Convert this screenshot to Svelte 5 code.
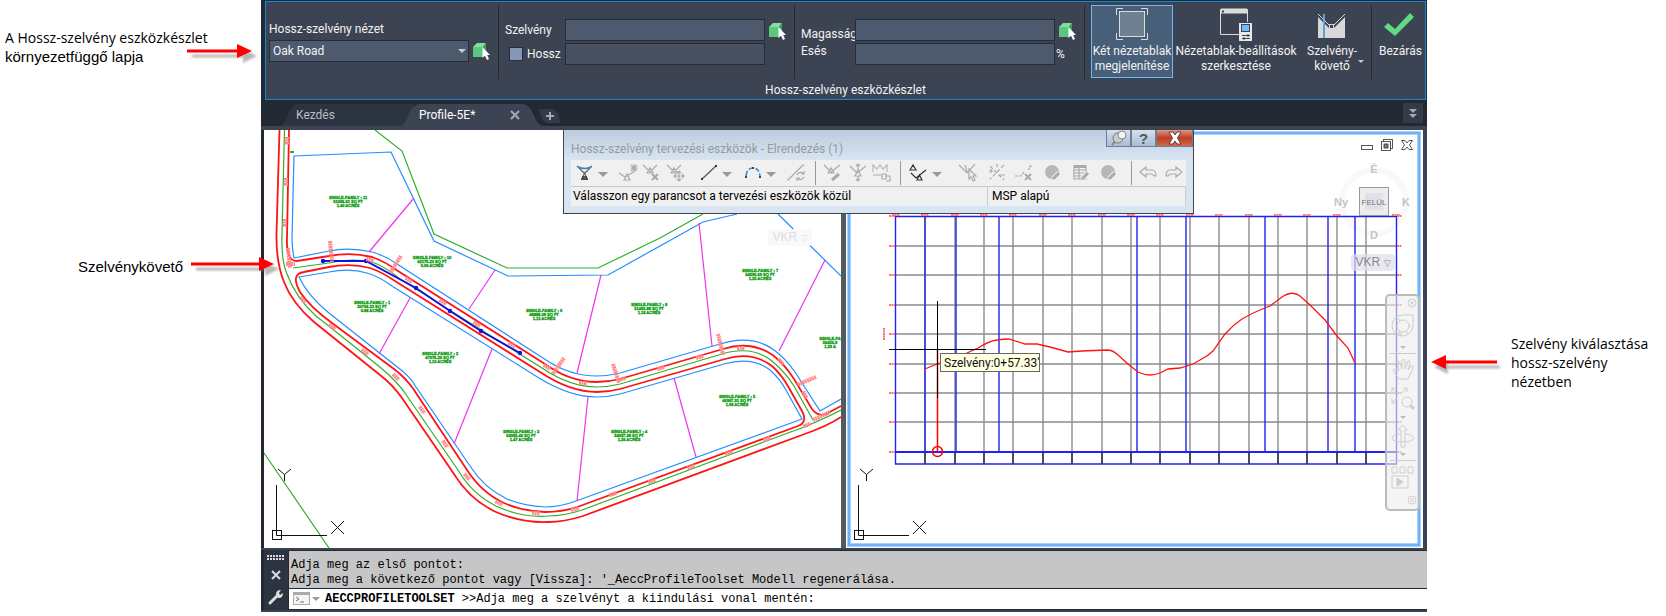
<script>
  let profileView = 'Oak Road';
  let useLength = false;
  let station = '';
  let stationLength = '';
  let elevation = '';
  let grade = '';

  // Lot labels: the three lines and the centre of the label
  const lots = [
    { lines: ['SINGLE-FAMILY : 11', '61006.01 SQ FT', '1.40 ACRES'], x: 84, y: 72 },
    { lines: ['SINGLE-FAMILY : 10', '42170.23 SQ FT', '0.96 ACRES'], x: 168, y: 132 },
    { lines: ['SINGLE-FAMILY : 1', '30704.23 SQ FT', '0.88 ACRES'], x: 108, y: 177 },
    { lines: ['SINGLE-FAMILY : 9', '48888.08 SQ FT', '1.12 ACRES'], x: 280, y: 185 },
    { lines: ['SINGLE-FAMILY : 2', '47976.29 SQ FT', '1.10 ACRES'], x: 176, y: 228 },
    { lines: ['SINGLE-FAMILY : 8', '51463.88 SQ FT', '1.18 ACRES'], x: 385, y: 179 },
    { lines: ['SINGLE-FAMILY : 7', '54596.69 SQ FT', '1.25 ACRES'], x: 496, y: 145 },
    { lines: ['SINGLE-FA', '56456.9', '1.29 A'], x: 566, y: 213 },
    { lines: ['SINGLE-FAMILY : 3', '63992.49 SQ FT', '1.47 ACRES'], x: 257, y: 306 },
    { lines: ['SINGLE-FAMILY : 4', '54937.98 SQ FT', '1.26 ACRES'], x: 365, y: 306 },
    { lines: ['SINGLE-FAMILY : 5', '46967.91 SQ FT', '1.08 ACRES'], x: 473, y: 271 }
  ];

  // Station marks along the alignments: x, y, angle
  const marks = [
    [23, 11, 90], [22, 52, 90], [21, 93, 90], [39, 170, 50], [68, 197, 38], [101, 222, 38],
    [132, 247, 45], [158, 280, 57], [181, 314, 57], [203, 347, 50], [235, 373, 25], [272, 383, 5],
    [311, 379, -15], [349, 364, -20], [388, 351, -20], [427, 337, -20], [465, 323, -20], [503, 309, -20],
    [106, 130, 15], [145, 150, 32], [179, 172, 32], [213, 194, 32], [248, 215, 32], [283, 237, 32],
    [319, 253, 5], [358, 249, -16], [397, 238, -16], [436, 227, -16], [477, 218, 0], [517, 232, 50],
    [541, 265, 65], [543, 295, -20]
  ];

  const nodes = [[59, 131], [102, 131], [152, 158], [186, 181], [217, 201], [256, 223]];

  const gridX = [79, 109, 138, 167, 197, 226, 256, 285, 314, 344, 373, 403, 432, 461, 491, 520];
  const gridY = [116, 145, 175, 204, 234, 263, 292];
  const curveX = [79, 110, 153, 291, 340, 419, 482, 509];

  const toolGroups = [
    { icons: ['tangents'], caret: true },
    { icons: ['insertPvi', 'deletePvi', 'movePvi'] },
    { icons: ['line'], caret: true },
    { icons: ['arc'], caret: true },
    { icons: ['convert'] },
    { sep: true },
    { icons: ['editPvi', 'raisePvi', 'copy'] },
    { sep: true },
    { icons: ['pviBased'], caret: true },
    { icons: ['select', 'deleteEntity', 'deleteMark', 'edit', 'grid', 'edit'], wide: true },
    { sep: true, last: true },
    { icons: ['undo', 'redo'], tight: true }
  ];

  const toolNames = {
    tangents: 'Érintők', insertPvi: 'MSP beszúrása', deletePvi: 'MSP törlése', movePvi: 'MSP mozgatása',
    line: 'Vonal', arc: 'Ív', convert: 'Átalakítás', editPvi: 'MSP szerkesztése', raisePvi: 'Emelés',
    copy: 'Másolás', pviBased: 'MSP alapú', select: 'Kiválasztás', deleteEntity: 'Elem törlése',
    deleteMark: 'Törlés', edit: 'Szerkesztés', grid: 'Táblázat', undo: 'Vissza', redo: 'Újra'
  };
</script>

{#snippet pick()}
  <button class="pick" aria-label="Kijelölés a rajzon">
    <svg width="18" height="18" viewBox="0 0 18 18">
      <path d="M0 5H10V15H0Z" fill="#5ac87f" />
      <path d="M0 5L4 1H13L10 5Z" fill="#86dca1" />
      <path d="M10 5L13 1V12L10 15Z" fill="#35a25b" />
      <path d="M9.500 5V16L12 13.800L14 18L16 17L14.200 13H17Z" fill="#fff" />
    </svg>
  </button>
{/snippet}

{#snippet arrow(length)}
  <svg class="arrow" width={length} height="24" viewBox="0 0 {length} 24" aria-hidden="true">
    <g class="shadow">
      <path d="M0 8.500H{length - 14}V3L{length} 10L{length - 14} 17V11.500H0Z" fill="#888" opacity=".6" />
    </g>
    <path d="M0 8.500H{length - 15}V3L{length} 10L{length - 15} 17V11.500H0Z" fill="#f00" />
  </svg>
{/snippet}

{#snippet ucs()}
  <g fill="none" stroke="#111">
    <path d="M12.500 355V405.500H63" />
    <rect x="8.500" y="400.500" width="9" height="9" />
    <path d="M14 339L20.500 344.500L27 339M20.500 344.500V351M67 391L80 404M80 391L67 404" />
  </g>
{/snippet}

{#snippet tool(name)}
  <button class="tool" aria-label={toolNames[name]}>
    <svg width="24" height="24" viewBox="0 0 24 24" fill="none" stroke="#aaa" stroke-width="1.200">
      {#if name === 'tangents'}
        <path d="M4 5L11 12M19 5L12 12M9 18L11.500 12L14 18Z" stroke="#666" />
        <path d="M5 6Q12 9 18 6" stroke="#2b88d8" stroke-width="1.500" />
        <path d="M8 18H15M9 16H14" stroke="#333" stroke-width="1.500" />
      {:else if name === 'insertPvi'}
        <path d="M2 12L8 16L18 10M7 19L10 13L13 19Z" />
        <path d="M17 3V11M13 7H21M14 4L20 10M20 4L14 10" />
      {:else if name === 'deletePvi'}
        <path d="M2 4L9 11L16 4M6 12L9 7L12 12Z" />
        <path d="M11 13L17 19M17 13L11 19" stroke-width="2" />
      {:else if name === 'movePvi'}
        <path d="M2 4L9 11L16 4M6 12L9 7L12 12Z" />
        <path d="M14 10V20M9 15H19M12 12L14 10L16 12M12 18L14 20L16 18M11 13L9 15L11 17M17 13L19 15L17 17" />
      {:else if name === 'line'}
        <path d="M5 18L19 5" stroke="#555" />
        <path d="M4 18H6M18 5H20" stroke="#333" stroke-width="2" />
      {:else if name === 'arc'}
        <path d="M5 15Q6 7 12 7Q18 7 19 15" stroke="#2b88d8" stroke-width="1.500" stroke-dasharray="5 2" />
        <path d="M4 16H6M18 16H20M11 7H13" stroke="#444" stroke-width="2" />
      {:else if name === 'convert'}
        <path d="M3 19L18 4M2 19H4M17 4H19" />
        <path d="M12 14A4 4 0 0 1 19 13M19 10V13H16M19 16A4 4 0 0 1 12 17M12 20V17H15" />
      {:else if name === 'editPvi'}
        <path d="M2 4L9 11L18 4M6 12L9 7L12 12Z" />
        <path d="M10 19L17 13" stroke-width="3" />
      {:else if name === 'raisePvi'}
        <path d="M4 5L11 12L20 5M9 15L12 9L15 15ZM12 9V3M10 5L12 3L14 5M12 15V20M10 18L12 20L14 18" />
      {:else if name === 'copy'}
        <path d="M3 11V4L7 8L10 4L13 8L17 4V11" stroke="#bbb" />
        <path d="M3 14H11M12 13H16V18H12ZM16 15H20V20H16" />
      {:else if name === 'pviBased'}
        <path d="M3 9L6 4L9 9ZM4 12L9 17L19 9M10 19L12.500 14L15 19Z" stroke="#333" />
      {:else if name === 'select'}
        <path d="M2 4L10 12L18 3M8 4L10 11" />
        <path d="M12 8V18L14 16L16 20L18 19L16 15H19Z" fill="#f0f0f0" />
      {:else if name === 'deleteEntity'}
        <path d="M5 5L19 19M19 4L5 18" stroke-dasharray="4 2" />
        <path d="M4 10H8M6 8V12M15 14H20M12 3V6" />
      {:else if name === 'deleteMark'}
        <path d="M2 15H8L11 11M15 9L18 5M16 5H20" stroke-dasharray="3 1" />
        <path d="M12 13L18 19M18 13L12 19" stroke-width="2" />
      {:else if name === 'edit'}
        <circle cx="11" cy="11" r="7" fill="#b8b8b8" stroke="none" />
        <path d="M12 18L18 12" stroke="#f0f0f0" stroke-width="5" />
        <path d="M12 18L18 12" stroke-width="3" />
      {:else if name === 'grid'}
        <path d="M5 5H17V18H5ZM5 9H17M5 12H17M5 15H17M10 5V18" />
        <path d="M5 5.500H17" stroke-width="3" />
        <path d="M13 18L19 12" stroke="#f0f0f0" stroke-width="5" />
        <path d="M13 18L19 12" stroke-width="3" />
      {:else if name === 'undo'}
        <path d="M4 11L10 6V9H16Q20 9 20 15H18Q17 13 15 13H10V16Z" />
      {:else}
        <path d="M20 11L14 6V9H8Q4 9 4 15H6Q7 13 9 13H14V16Z" />
      {/if}
    </svg>
  </button>
{/snippet}

<div class="page">
  <aside class="notes-left">
    <div class="note first">
      <p><span class="humanist">A Hossz-szelvény eszközkészlet</span><br />környezetfüggő lapja</p>
      <div class="first-arrow">{@render arrow(65)}</div>
    </div>
    <div class="note second">
      <p>Szelvénykövető</p>
      {@render arrow(83)}
    </div>
  </aside>

  <main class="app">
    <section class="ribbon">
      <div class="panels">
        <div class="panel view-panel">
          <label for="view">Hossz-szelvény nézet</label>
          <div class="combo">
            <select id="view" bind:value={profileView}>
              <option>Oak Road</option>
            </select>
            <i class="caret"></i>
          </div>
          {@render pick()}
        </div>

        <div class="panel fields station-panel">
          <label for="station">Szelvény</label>
          <input id="station" type="text" bind:value={station} />
          {@render pick()}
          <label class="check"><input type="checkbox" bind:checked={useLength} /> Hossz</label>
          <input class="dim" type="text" aria-label="Hossz" bind:value={stationLength} />
        </div>

        <div class="panel fields elevation-panel">
          <label class="low" for="elevation">Magasság</label>
          <input id="elevation" type="text" bind:value={elevation} />
          {@render pick()}
          <label class="high" for="grade">Esés</label>
          <input id="grade" type="text" bind:value={grade} />
          <span class="unit">%</span>
        </div>

        <div class="panel buttons">
          <button class="big active">
            <svg width="36" height="36" viewBox="0 0 36 36" fill="none" stroke="#dcdcdc">
              <rect x="5.500" y="5.500" width="25" height="25" fill="#6f8091" />
              <path d="M2.500 9V2.500H9M27 2.500H33.500V9M33.500 27V33.500H27M9 33.500H2.500V27" />
            </svg>
            Két nézetablak<br />megjelenítése
          </button>
          <button class="big settings">
            <svg width="36" height="36" viewBox="0 0 36 36" fill="none" stroke="#dcdcdc">
              <path d="M21 28.500H2.500V3.500H29.500V16" />
              <path d="M3 5H29" stroke-width="5" />
              <path d="M4 5.500H6" stroke="#3c4453" stroke-width="2" />
              <rect x="21" y="17" width="13" height="18" fill="#e8e8e8" stroke="none" />
              <rect x="23.500" y="18.500" width="8" height="7" fill="#6cbcff" stroke="#3c4453" />
              <path d="M24 29.500H32M24 32.500H32M30 28V31M26 31V34" stroke="#3c4453" />
            </svg>
            Nézetablak-beállítások<br />szerkesztése
          </button>
          <button class="big tracker">
            <svg width="36" height="36" viewBox="0 0 36 36" fill="none">
              <path d="M4 11L9 16V32H4ZM11 18L15 22H20L31 11V32H11Z" fill="#d8d8d8" />
              <path d="M4 8L15 19M20 19L31 8" stroke="#d8d8d8" />
              <rect x="15.500" y="18.500" width="4" height="4" fill="#3c4453" stroke="#d8d8d8" />
              <path d="M10 8V32" stroke="#6cbcff" stroke-width="1.500" />
            </svg>
            Szelvény-<br />követő
            <i class="caret"></i>
          </button>
        </div>

        <div class="panel buttons last">
          <button class="big close">
            <svg width="36" height="36" viewBox="0 0 36 36">
              <path d="M2 21L6 17L13 23L28 7L32 11L13 30Z" fill="#5edb84" />
            </svg>
            Bezárás
          </button>
        </div>
      </div>
      <h1>Hossz-szelvény eszközkészlet</h1>
    </section>

    <nav class="tabs">
      <button class="tab">Kezdés</button>
      <button class="tab current">Profile-5E*
        <svg width="10" height="10" viewBox="0 0 10 10"><path d="M1 1L9 9M9 1L1 9" stroke="#a5a9b0" stroke-width="2" /></svg>
      </button>
      <button class="add" aria-label="Új rajz">
        <svg width="22" height="14" viewBox="0 0 22 14">
          <path d="M0 0H14Q20 2 21 14H8Q2 12 0 0Z" fill="#343b48" />
          <path d="M11 3V11M7 7H15" stroke="#a5a9b0" stroke-width="2" />
        </svg>
      </button>
      <button class="more" aria-label="További lapok">
        <svg width="10" height="10" viewBox="0 0 10 10" fill="#a5a9b0">
          <path d="M1 1H9L5 5ZM1 6H9L5 10Z" />
        </svg>
      </button>
    </nav>

    <section class="viewports">
      <div class="viewport">
        <svg class="drawing" viewBox="0 0 577 418" fill="none">
          <g stroke="#2fae2f" stroke-width="1.200">
            <path d="M111 0L138 21L170 104L243 138H334L396 108L439 84" />
            <path d="M0 323L65 418" />
            <path d="M20.500 0L18 104Q17 130 23 144Q32 168 52 186Q80 208 117 238Q134 252 143 266L194 340Q208 364 232 376Q258 388 284 386Q300 386 318 380L540 297Q566 286 577 280" />
            <path d="M29 138L65 133Q86 128 108 132Q122 137 136 149L278 238Q306 257 333 257Q344 257 356 254L458 224Q488 215 508 231Q522 243 530 256L549 290" />
          </g>
          <g stroke="#1e8fff" stroke-width="1.200">
            <path d="M30 128Q28 118 28 108L30 26L127 22L170 111L244 146L344 145L439 92L473 84M514 84L577 146" />
            <path d="M30 128L65 121Q85 117 108 122Q122 126 133 134L282 230Q306 246 333 246Q344 246 356 243L456 214Q488 204 510 220Q521 228 531 242L556 281L577 269" />
            <path d="M35 147L65 142Q86 138 103 143Q116 147 128 156L275 248Q306 267 333 267Q345 267 356 264L460 234Q488 226 506 240Q516 249 522 260L538 289L312 371Q296 377 281 377Q260 376 243 369Q220 358 206 336L152 257Q146 246 132 236L65 183Q44 166 35 147Z" />
          </g>
          <g stroke="#ff1414" stroke-width="1.800">
            <path d="M15.500 0L12.500 104Q12 132 20 152Q28 173 50 192L116 245Q128 254 138 268L190 344Q206 370 232 382Q257 393 284 392Q300 392 319 386L538 305Q564 296 577 287" />
            <path d="M25 0L23 108Q22 131 33 131L65 126Q87 122 108 127Q122 132 134 141L281 234Q306 252 333 252Q344 252 356 249L459 219Q488 210 510 226Q521 235 530 249L548 279Q554 287 562 284L577 276" />
            <path d="M40 142L65 137Q87 133 106 138Q118 142 131 151L276 242Q306 262 333 262Q345 262 356 259L461 229Q488 221 508 236Q518 245 525 258L538 281Q544 292 534 296L316 376Q300 382 281 382Q258 381 240 373Q218 363 203 340L150 260Q142 248 130 239L68 193Q46 177 36 162Q26 144 40 142Z" />
          </g>
          <path
            d="M150 68L105 122M231 140L205 179M146 168L115 224M228 219L190 314M337 145L313 243M435 93L448 216M561 130L515 221M324 267L313 371M410 248L432 327"
            stroke="#f032f0"
            stroke-width="1.200"
          />
          <path d="M59 131L102 131L152 158L186 181L217 201L256 223" stroke="#1010e0" stroke-width="1.800" />
          {#each nodes as [x, y]}
            <circle cx={x} cy={y} r="2.200" fill="#1010e0" />
          {/each}
          <g stroke="#ff8a8a" stroke-width="4" stroke-dasharray="2 .500">
            {#each marks as [x, y, a]}
              <path d="M-4 0H4" transform="translate({x} {y}) rotate({a})" />
            {/each}
            <path d="M66 111L68 132M137 126L126 143M300 228L289 244M349 234L355 253M454 204L459 225M552 247L533 255M549 290L566 282M24 118L26 138M22 134H31" />
          </g>
          <path d="M26 22H30" stroke="#2fae2f" stroke-width="2" />
          <g class="lots">
            {#each lots as lot}
              {#each lot.lines as line, i}
                <text x={lot.x} y={lot.y - 3 + i * 4}>{line}</text>
              {/each}
            {/each}
          </g>
          {@render ucs()}
        </svg>
        <button class="vkr faint">VKR <span>▽</span></button>
      </div>

      <div class="splitter"></div>

      <div class="viewport">
        <svg class="drawing" viewBox="0 0 577 418" fill="none">
          <circle cx="528" cy="72" r="32" stroke="#f9f9f9" stroke-width="6" />
          <g stroke="#8a8a8a" stroke-width="1.400">
            {#each gridX as x}
              <path d="M{x} 86V322" />
              <path d="M{x} 322V334" stroke="#000" />
            {/each}
            {#each gridY as y}
              <path d="M50 {y}H550" />
            {/each}
          </g>
          <g stroke="#2222f0" stroke-width="1.400">
            {#each curveX as x}
              <path d="M{x} 86V322" />
            {/each}
            <path d="M49.500 86.500H550.500V334H49.500Z" />
            <path d="M49 322H551" stroke-width="2" />
          </g>
          <g stroke="#ff7070" stroke-width="2" stroke-dasharray="2 .500">
            {#each [86, ...gridY, 322] as y}
              <path d="M43 {y}H49M551 {y}H556" />
            {/each}
            {#each [50, ...gridX, 550] as x}
              <path d="M{x - 4} 85H{x + 4}" />
            {/each}
            <path d="M38 198V210" />
          </g>
          <path
            d="M79 239L86 236L94 233L121 223L132 218Q143 211 151 210Q158 209 163 209L179 214L191 214L204 217L222 222L236 221L261 220Q267 220 272 225L282 234L292 242Q298 245 304 245Q309 245 314 243L322 239L334 238L347 234L354 230Q362 226 367 221L379 204Q387 195 396 189Q408 182 424 176L436 167Q446 160 454 166L464 175L479 190L491 206L502 218L509 233"
            stroke="#ff1414"
            stroke-width="1.300"
          />
          <path d="M91.500 219V322" stroke="#f00" stroke-width="1.500" />
          <circle cx="91.500" cy="321.500" r="5" stroke="#f00" stroke-width="1.500" />
          <path d="M91.500 171V268M43 219.500H140" stroke="#000" />
          <rect x="94.500" y="223.500" width="99" height="18" fill="#ffffe1" stroke="#666" />
          <text class="tip" x="98" y="237">Szelvény:0+57.33'</text>
          <g class="cube">
            <rect x="513.500" y="57.500" width="29" height="28" fill="#ededed" stroke="#999" />
            <rect x="519" y="63" width="18" height="17" fill="#dfe1e6" />
            <text x="528" y="75" class="face">FELÜL</text>
            <text x="528" y="43">É</text>
            <text x="495" y="76">Ny</text>
            <text x="560" y="76">K</text>
            <text x="528" y="109">D</text>
          </g>
          {@render ucs()}
          <rect x="3" y="3" width="570" height="412" stroke="#a6d2ff" stroke-width="4" />
          <rect x="3" y="3" width="570" height="412" stroke="#5ea8f7" stroke-width="1.500" />
        </svg>

        <div class="win-buttons">
          <button aria-label="Kis méret">
            <svg width="14" height="14" viewBox="0 0 14 14" fill="#fff" stroke="#555"><rect x="1.500" y="7.500" width="11" height="4" /></svg>
          </button>
          <button aria-label="Teljes méret">
            <svg width="14" height="14" viewBox="0 0 14 14" fill="#fff" stroke="#555">
              <rect x="3.500" y="1.500" width="9" height="9" /><rect x="1.500" y="3.500" width="9" height="9" /><rect x="4.500" y="6.500" width="3" height="3" stroke-width="2" />
            </svg>
          </button>
          <button aria-label="Bezárás">
            <svg width="14" height="14" viewBox="0 0 14 14" fill="#fff" stroke="#555">
              <path d="M1.500 2.500H5L7 5L9 2.500H12.500L9.500 7L12.500 11.500H9L7 9L5 11.500H1.500L4.500 7Z" />
            </svg>
          </button>
        </div>
        <button class="vkr">VKR <span>▽</span></button>

        <div class="navbar">
          <button class="end" aria-label="Bezárás">
            <svg width="10" height="10" viewBox="0 0 10 10"><circle cx="5" cy="5" r="4" /><path d="M3 3L7 7M7 3L3 7" /></svg>
          </button>
          <button class="tall" aria-label="Navigációs kerék">
            <svg width="24" height="24" viewBox="0 0 24 24"><path d="M12 1H22V12A10.500 10.500 0 1 1 12 1Z" /><circle cx="12" cy="12" r="6" /><path d="M4 12H6M18 12H20M7 4L9 7M7 20L9 17M17 20L15 17" /></svg>
          </button>
          <i class="caret"></i>
          <hr />
          <button class="tall" aria-label="Eltolás">
            <svg width="24" height="24" viewBox="0 0 24 24"><path d="M8 21L2 12Q4 9 8 13L6 4Q8 2 9 5L11 11L11 2Q13 0 14 3V11L17 3Q19 2 19 5L17 12L20 8Q23 7 22 10L17 21Z" /></svg>
          </button>
          <button class="mid" aria-label="Nagyítás">
            <svg width="24" height="24" viewBox="0 0 24 24"><path d="M1 1L6 6M1 5V1H5M16 1L11 6M12 1H16V5M1 16L6 11M1 12V16H5" /><circle cx="16" cy="15" r="5" /><path d="M19 18L23 22" stroke-width="3" /></svg>
          </button>
          <i class="caret"></i>
          <button class="mid" aria-label="Keringés">
            <svg width="24" height="24" viewBox="0 0 24 24"><path d="M10 23V6H7L12 1L16 6H14V23ZM9 10Q1 11 1 14Q2 18 12 18Q22 18 23 14Q22 11 15 10" /></svg>
          </button>
          <i class="caret"></i>
          <hr />
          <button class="tall" aria-label="Bemutató">
            <svg width="24" height="24" viewBox="0 0 24 24"><path d="M1 2H6V8H1ZM9 2H14V8H9ZM17 2H22V8H17ZM1 11H17V23H1Z" /><path d="M6 13L12 17L6 21Z" fill="#ccc" /></svg>
          </button>
          <button class="end" aria-label="Beállítások">
            <svg width="10" height="10" viewBox="0 0 10 10"><circle cx="5" cy="5" r="4" /><path d="M3 4H7M3 6H7" /></svg>
          </button>
        </div>
      </div>

      <div class="palette">
        <header>
          <h2>Hossz-szelvény tervezési eszközök - Elrendezés (1)</h2>
          <button aria-label="Rögzítés">
            <svg width="18" height="16" viewBox="0 0 18 16">
              <path d="M2 15L7 9" stroke="#888" stroke-width="2" />
              <circle cx="8" cy="8" r="5" fill="#ccc" stroke="#777" />
              <circle cx="12" cy="5" r="4" fill="#f4f4f4" stroke="#888" />
            </svg>
          </button>
          <button class="help" aria-label="Súgó">?</button>
          <button class="red" aria-label="Bezárás">
            <svg width="16" height="14" viewBox="0 0 16 14">
              <path d="M2 1H6L8 4L10 1H14L10.500 7L14 13H10L8 10L6 13H2L5.500 7Z" fill="#fff" stroke="#6b3a36" />
            </svg>
          </button>
        </header>
        <div class="toolbar">
          {#each toolGroups as group}
            {#if group.sep}
              <i class="sep" class:push={group.last}></i>
            {:else}
              <div class="group" class:wide={group.wide} class:tight={group.tight}>
                {#each group.icons as name}
                  {@render tool(name)}
                {/each}
                {#if group.caret}<i class="caret"></i>{/if}
              </div>
            {/if}
          {/each}
        </div>
        <div class="status">
          <span>Válasszon egy parancsot a tervezési eszközök közül</span>
          <span class="mode">MSP alapú</span>
        </div>
      </div>
    </section>

    <section class="command">
      <div class="grip">
        <svg width="18" height="6" viewBox="0 0 18 6"><path d="M0 1H18M0 4H18" stroke="#ddd" stroke-width="2" stroke-dasharray="2 1" /></svg>
        <button aria-label="Bezárás">
          <svg width="12" height="12" viewBox="0 0 12 12"><path d="M2 2L10 10M10 2L2 10" stroke="#ddd" stroke-width="2" /></svg>
        </button>
        <button aria-label="Testreszabás">
          <svg width="16" height="16" viewBox="0 0 16 16">
            <path d="M2 14L9 7" stroke="#ddd" stroke-width="3" stroke-linecap="round" />
            <path d="M8 5Q8 1 13 1L11 4L12 6L15 4Q15 9 11 9L8 8Z" fill="#ddd" />
          </svg>
        </button>
      </div>
      <div class="console">
        <div class="history">
          <p>Adja meg az első pontot:</p>
          <p>Adja meg a következő pontot vagy [Vissza]: '_AeccProfileToolset Modell regenerálása.</p>
        </div>
        <div class="prompt">
          <svg width="17" height="14" viewBox="0 0 17 14" fill="none" stroke="#aaa">
            <rect x=".5" y=".5" width="16" height="12" fill="#f4f4f4" /><path d="M1 2H16" stroke-width="2" /><path d="M3 5L6 7L3 9M7 10H11" stroke="#777" />
          </svg>
          <i class="caret"></i>
          <label for="cmd"><b>AECCPROFILETOOLSET</b> &gt;&gt;Adja meg a szelvényt a kiindulási vonal mentén:</label>
          <input id="cmd" type="text" />
        </div>
      </div>
    </section>
  </main>

  <aside class="notes-right">
    <div class="flip">{@render arrow(66)}</div>
    <p class="humanist">Szelvény kiválasztása<br />hossz-szelvény<br />nézetben</p>
  </aside>
</div>

<style>
  :global(body) {
    margin: 0;
    background: #fff;
  }

  .page {
    display: flex;
    align-items: flex-start;
    font-family: Roboto, 'Open Sans', sans-serif;
    font-size: 12px;
    color: #000;
  }

  .page * {
    box-sizing: border-box;
  }

  p,
  h1,
  h2 {
    margin: 0;
    font-weight: normal;
  }

  button,
  input,
  select {
    font: inherit;
    color: inherit;
    border: 0;
    margin: 0;
    padding: 0;
    background: none;
  }

  svg {
    display: block;
    flex: none;
  }

  .caret {
    flex: none;
    width: 0;
    height: 0;
    border: 4px solid transparent;
    border-top-color: #c8ccd2;
    border-bottom-width: 0;
  }

  /* callouts */
  .notes-left {
    flex: none;
    width: 261px;
    padding-top: 28px;
    font-family: 'Liberation Sans', Arial, sans-serif;
    font-size: 15px;
    line-height: 19px;
  }

  .humanist {
    font-family: 'Open Sans', 'Noto Sans', sans-serif;
    font-size: 14px;
  }

  .note {
    position: relative;
    white-space: nowrap;
  }

  .first {
    padding-left: 5px;
  }

  .first-arrow {
    position: absolute;
    left: 187px;
    top: 13px;
  }

  .second {
    display: flex;
    align-items: center;
    gap: 8px;
    padding-left: 78px;
    margin-top: 188px;
    z-index: 2;
  }

  .arrow {
    overflow: visible;
  }

  .shadow {
    filter: blur(1px);
    transform: translate(5px, 5px);
  }

  .notes-right {
    flex: none;
    display: flex;
    gap: 14px;
    width: 239px;
    padding: 334px 0 0 4px;
    line-height: 19px;
  }

  .flip {
    transform: scaleX(-1);
    padding-top: 18px;
  }

  .flip .shadow {
    transform: translate(-3px, 5px);
  }

  /* application frame */
  .app {
    flex: 1;
    min-width: 0;
    background: #222933;
    padding-top: 1px;
  }

  .ribbon {
    margin: 0 1px 0 4px;
    height: 99px;
    border: 1px solid #1287cf;
    background: #3c4453;
    color: #f2f2f2;
    line-height: 15px;
  }

  .panels {
    display: flex;
    height: 79px;
    padding-top: 3px;
  }

  .panel {
    height: 74px;
    border-right: 1px solid #222933;
    white-space: nowrap;
  }

  .panel.last {
    border: 0;
    flex: 1;
    justify-content: center;
  }

  .view-panel {
    display: grid;
    grid-template-columns: 200px 20px;
    grid-template-rows: 18px 22px;
    align-content: start;
    padding: 17px 9px 0 3px;
  }

  .view-panel label {
    grid-column: 1 / 3;
  }

  .combo {
    display: flex;
    align-items: center;
    border: 1px solid #262c37;
    background: #4d5a6e;
    padding-right: 2px;
  }

  select {
    flex: 1;
    appearance: none;
    height: 18px;
    padding-left: 3px;
    line-height: 18px;
  }

  .pick {
    width: 18px;
    height: 18px;
    margin: 2px 0 0 4px;
  }

  .fields {
    display: grid;
    grid-template-rows: 22px 22px;
    gap: 2px 0;
    align-content: start;
    align-items: center;
    padding: 14px 9px 0 6px;
  }

  .station-panel {
    grid-template-columns: 60px 200px 20px;
  }

  .elevation-panel {
    grid-template-columns: 54px 200px 20px;
  }

  .fields input[type='text'] {
    width: 200px;
    height: 22px;
    border: 1px solid #262c37;
    background: #4d5a6e;
    padding: 0 4px;
  }

  .fields input.dim {
    background: #475161;
  }

  .check {
    display: flex;
    align-items: center;
    gap: 4px;
    padding-left: 4px;
  }

  .check input {
    appearance: none;
    width: 14px;
    height: 14px;
    border: 1px solid #262c37;
    background: #8497b8;
  }

  .low {
    padding-top: 8px;
  }

  .high {
    padding-bottom: 6px;
  }

  .unit {
    padding-left: 1px;
  }

  .buttons {
    display: flex;
    padding: 0 6px;
  }

  .big {
    display: flex;
    flex-direction: column;
    align-items: center;
    position: relative;
    height: 73px;
    border: 1px solid transparent;
    line-height: 15px;
    text-align: center;
    white-space: nowrap;
  }

  .big svg {
    margin-bottom: 2px;
  }

  .big.active {
    width: 82px;
    border-color: #6cb8f5;
    background: #475f79;
  }

  .settings {
    width: 126px;
  }

  .tracker {
    width: 66px;
  }

  .tracker .caret {
    position: absolute;
    right: 0;
    bottom: 14px;
    border-width: 3px;
    border-bottom-width: 0;
  }

  .ribbon h1 {
    font-size: 12px;
    line-height: 18px;
    text-align: center;
  }

  .tabs {
    display: flex;
    align-items: flex-end;
    height: 30px;
    padding: 0 4px 0 19px;
    border-bottom: 4px solid #3c4453;
    color: #b9bdc4;
  }

  .tab {
    flex: none;
    width: 134px;
    height: 22px;
    padding-left: 16px;
    text-align: left;
    background: #2d3441;
    clip-path: path('M0 22C8 20 6 0 20 0H134V22Z');
  }

  .tab.current {
    display: flex;
    align-items: center;
    justify-content: space-between;
    width: 142px;
    margin-left: -13px;
    padding: 0 23px 0 18px;
    color: #fff;
    background: #3c4453;
    clip-path: path('M0 22C8 20 6 0 20 0H120C134 0 132 20 142 22Z');
  }

  .add {
    height: 14px;
    margin: 0 0 3px -4px;
  }

  .more {
    display: grid;
    place-items: center;
    width: 20px;
    height: 20px;
    margin: 0 0 3px auto;
    background: #343b48;
  }

  /* viewports */
  .viewports {
    position: relative;
    display: flex;
    margin-left: 3px;
    border-right: 4px solid #3c4453;
    background: #fff;
  }

  .viewport {
    position: relative;
    flex: 1;
    min-width: 0;
    overflow: hidden;
  }

  .drawing {
    width: 100%;
    height: auto;
  }

  .splitter {
    width: 5px;
    background: #55595c;
  }

  .lots {
    font: bold 4px 'Liberation Sans', sans-serif;
    fill: #0a9a0a;
    stroke: #0a9a0a;
    stroke-width: 0.3px;
    text-anchor: middle;
  }

  .tip {
    font-size: 12px;
    fill: #111;
  }

  .cube {
    font: bold 11px 'Liberation Sans', sans-serif;
    fill: #c4c4c4;
    text-anchor: middle;
  }

  .face {
    font: 8px 'Liberation Sans', sans-serif;
    fill: #777;
  }

  .vkr {
    position: absolute;
    top: 124px;
    right: 28px;
    width: 44px;
    height: 17px;
    border-radius: 4px;
    background: rgba(222, 222, 238, 0.7);
    color: #8a8a8a;
    font-family: 'Liberation Sans', Arial, sans-serif;
    line-height: 17px;
    white-space: nowrap;
  }

  .vkr span {
    font-size: 9px;
  }

  .vkr.faint {
    top: 99px;
    right: 29px;
    background: #f9f9fb;
    color: #dedede;
  }

  .win-buttons {
    position: absolute;
    top: 8px;
    right: 9px;
    display: flex;
    gap: 6px;
  }

  .navbar {
    position: absolute;
    top: 164px;
    right: 3px;
    display: flex;
    flex-direction: column;
    align-items: center;
    width: 35px;
    padding-bottom: 2px;
    border: 2px solid #bbb;
    border-radius: 5px;
    background: rgba(236, 236, 236, 0.6);
  }

  .navbar button {
    display: grid;
    place-items: center;
  }

  .navbar svg {
    fill: none;
    stroke: #cecece;
  }

  .navbar .end {
    height: 14px;
    align-self: flex-end;
    padding-right: 1px;
  }

  .navbar .tall {
    height: 32px;
  }

  .navbar .mid {
    height: 26px;
  }

  .navbar .caret {
    border-width: 3px;
    border-bottom-width: 0;
    border-top-color: #bbb;
    margin: 4px 0;
  }

  hr {
    width: 26px;
    margin: 0;
    border: 0;
    border-top: 1px solid #ccc;
  }

  /* floating toolbar */
  .palette {
    position: absolute;
    top: -1px;
    left: 299px;
    width: 631px;
    padding: 0 7px 7px;
    border: 1px solid #444;
    background: linear-gradient(#bccde0, #d7e4f2 30px);
  }

  .palette header {
    display: flex;
    align-items: flex-start;
    height: 30px;
    margin-right: -7px;
  }

  .palette h2 {
    flex: 1;
    padding-top: 9px;
    font-size: 12px;
    line-height: 20px;
    color: #999;
  }

  .palette header button {
    display: grid;
    place-items: center;
    width: 25px;
    height: 17px;
    border: 1px solid #6c7f96;
    border-top: 0;
    background: linear-gradient(#d3e0ee, #a9bdd4);
  }

  .palette header .help {
    font: bold 15px 'Liberation Sans', Arial, sans-serif;
    color: #555;
  }

  .palette header .red {
    width: 37px;
    background: linear-gradient(#dc9a8c, #c03c24 50%, #d06a50);
  }

  .toolbar {
    display: flex;
    align-items: center;
    gap: 8px;
    height: 27px;
    padding-left: 2px;
    background: #f0f0f0;
    border-bottom: 1px solid #c8c8c8;
  }

  .group {
    display: flex;
    align-items: center;
  }

  .group .caret {
    margin: 2px 1px 0;
    border-width: 5px;
    border-bottom-width: 0;
    border-top-color: #999;
  }

  .wide {
    gap: 4px;
    padding-left: 6px;
  }

  .tight {
    gap: 2px;
  }

  .tool {
    width: 24px;
    height: 24px;
  }

  .sep {
    width: 1px;
    height: 24px;
    margin: 0 -2px;
    background: #999;
  }

  .sep.push {
    margin: 0 -4px 0 auto;
  }

  .status {
    display: flex;
    height: 19px;
    line-height: 19px;
    background: #f0f0f0;
  }

  .status span {
    flex: 1;
    padding-left: 2px;
  }

  .status .mode {
    flex: none;
    width: 199px;
    padding-left: 4px;
    border: 1px solid #ccc;
    border-width: 0 1px;
  }

  /* command line */
  .command {
    display: flex;
    padding-left: 3px;
    border-top: 2px solid #3c4453;
    border-bottom: 2px solid #3c4453;
    background: #222933;
    font-family: 'Liberation Mono', monospace;
  }

  .grip {
    display: flex;
    flex-direction: column;
    align-items: center;
    gap: 8px;
    width: 24px;
    padding-top: 5px;
    background: #2d3441;
  }

  .console {
    flex: 1;
    padding: 1px 0 1px 1px;
  }

  .history {
    padding: 7px 2px 0;
    background: #c6c6c6;
    line-height: 15px;
  }

  .prompt {
    display: flex;
    align-items: center;
    height: 20px;
    margin-top: 1px;
    padding-left: 4px;
    background: #fff;
    white-space: nowrap;
  }

  .prompt .caret {
    margin: 0 5px 0 2px;
    border-top-color: #999;
  }

  .prompt input {
    flex: 1;
    min-width: 0;
    outline: 0;
  }
</style>
